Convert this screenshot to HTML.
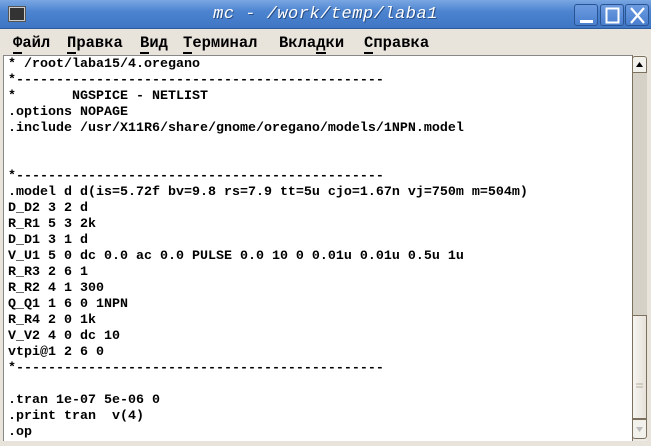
<!DOCTYPE html>
<html><head><meta charset="utf-8"><style>
*{margin:0;padding:0;box-sizing:border-box}
body{width:651px;height:446px;overflow:hidden;background:#e8e4dc;position:relative;font-family:"Liberation Sans","DejaVu Sans",sans-serif}
#title{position:absolute;left:0;top:0;width:651px;height:29px;background:linear-gradient(#7aa7e3,#4d84d0 40%,#3f76c4);border-bottom:1px solid #2d5a9c}
#title .t{position:absolute;left:0;right:0;top:5px;text-align:center;color:#fff;font:italic 17px "Liberation Mono",monospace;letter-spacing:0.5px;text-shadow:1px 1px 0 #2a4f85}
.ic{position:absolute;left:9px;top:7px;width:16px;height:14px;background:#333;border:1px solid #ccc;box-shadow:0 0 0 1px #555}
.btn{position:absolute;top:4px;width:24px;height:22px;border:1px solid #2a5392;border-radius:3px;background:linear-gradient(#6c9be0,#4a7fcf)}
.btn svg{position:absolute;left:0;top:0}
#menu{position:absolute;top:30px;left:0;width:651px;height:25px;font:bold 15.5px "Liberation Mono",monospace;color:#000}
#menu span{position:absolute;top:4px}
#menu u{text-decoration:none;border-bottom:2px solid #000}
#term{position:absolute;left:3px;top:55px;width:629px;height:386px;background:#fff;border-top:1px solid #888;border-left:1px solid #888}
pre{position:absolute;left:4px;top:1px;font:bold 13.33px/16px "Liberation Mono",monospace;color:#000}
#sb{position:absolute;left:632px;top:55px;width:15px;height:386px;background:#eeebe5;border-left:1px solid #7c705f}
#trough{position:absolute;left:632px;top:72px;width:15px;height:243px;background:#d6d1c6;border-left:1px solid #7c705f}
#thumb{position:absolute;left:632px;top:315px;width:15px;height:104px;background:linear-gradient(90deg,#f7f5f1,#e6e2da);border:1px solid #7c705f}
#down{position:absolute;left:632px;top:419px;width:15px;height:20px;border:1px solid #7c705f;border-radius:0 0 3px 3px;background:#f3f1ec}
#up{position:absolute;left:632px;top:56px;width:15px;height:17px;border:1px solid #7c705f;border-radius:3px 3px 0 0;background:#f3f1ec}
</style></head><body>
<div id="title"><div class="ic"></div><div class="t">mc - /work/temp/laba1</div>
<div class="btn" style="left:574px"><svg width="24" height="22"><rect x="5" y="15" width="13" height="3" fill="#fff"/></svg></div>
<div class="btn" style="left:600px"><svg width="24" height="22"><rect x="5.5" y="3.5" width="12" height="14" fill="none" stroke="#fff" stroke-width="2"/></svg></div>
<div class="btn" style="left:625px"><svg width="24" height="22"><path d="M5 3L18 18M18 3L5 18" stroke="#fff" stroke-width="2.2"/></svg></div>
</div>
<div id="menu">
<span style="left:13px"><u>Ф</u>айл</span>
<span style="left:67px"><u>П</u>равка</span>
<span style="left:140px"><u>В</u>ид</span>
<span style="left:183px"><u>Т</u>ерминал</span>
<span style="left:279px">Вкла<u>д</u>ки</span>
<span style="left:364px"><u>С</u>правка</span>
</div>
<div id="term"><pre>* /root/laba15/4.oregano
*----------------------------------------------
*       NGSPICE - NETLIST
.options NOPAGE
.include /usr/X11R6/share/gnome/oregano/models/1NPN.model


*----------------------------------------------
.model d d(is=5.72f bv=9.8 rs=7.9 tt=5u cjo=1.67n vj=750m m=504m)
D_D2 3 2 d
R_R1 5 3 2k
D_D1 3 1 d
V_U1 5 0 dc 0.0 ac 0.0 PULSE 0.0 10 0 0.01u 0.01u 0.5u 1u
R_R3 2 6 1
R_R2 4 1 300
Q_Q1 1 6 0 1NPN
R_R4 2 0 1k
V_V2 4 0 dc 10
vtpi@1 2 6 0
*----------------------------------------------

.tran 1e-07 5e-06 0
.print tran  v(4)
.op</pre></div>
<div id="sb"></div>
<div id="trough"></div>
<div id="up"><svg width="13" height="15"><path d="M3 10L6.5 5L10 10Z" fill="#000"/></svg></div>
<div id="thumb"><svg width="13" height="102"><path d="M3 68H10M3 71H10" stroke="#b5ad9c"/></svg></div>
<div id="down"><svg width="13" height="18"><path d="M3 7L6.5 12L10 7Z" fill="#bbb"/></svg></div>
</body></html>
